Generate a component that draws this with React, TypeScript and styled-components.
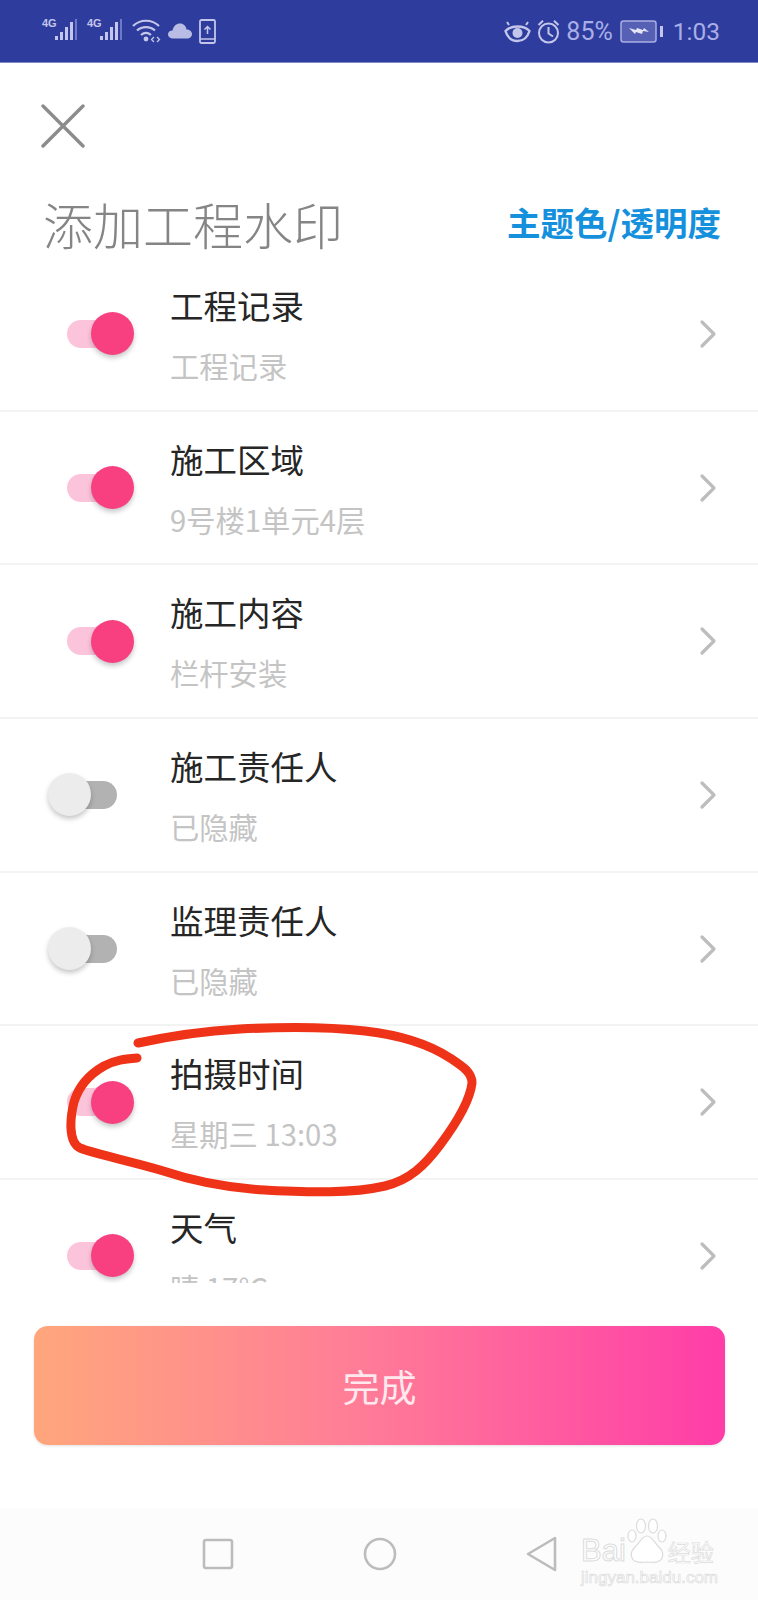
import React from "react";
import styled, { createGlobalStyle } from "styled-components";

const CJK = `"Noto Sans CJK SC", "Noto Sans", sans-serif`;

const GlobalStyle = createGlobalStyle`
    html, body {
        margin: 0;
        padding: 0;
        background: #fff;
    }
    body {
        font-family: ${CJK};
    }
`;

const items = [
    { title: "工程记录", sub: "工程记录", on: true },
    { title: "施工区域", sub: "9号楼1单元4层", on: true },
    { title: "施工内容", sub: "栏杆安装", on: true },
    { title: "施工责任人", sub: "已隐藏", on: false },
    { title: "监理责任人", sub: "已隐藏", on: false },
    { title: "拍摄时间", sub: "星期三 13:03", on: true },
    { title: "天气", sub: "晴 17°C", on: true },
];

const Signal = () => (
    <SignalWrap>
        <SignalLabel>4G</SignalLabel>
        <svg width="25" height="24" viewBox="0 0 25 24">
            <rect x="0" y="17" width="3" height="4" fill="#c3c6ea" />
            <rect x="5" y="13" width="3" height="8" fill="#c3c6ea" />
            <rect x="10" y="8" width="3" height="13" fill="#c3c6ea" />
            <rect x="15" y="3" width="3" height="18" fill="#c3c6ea" />
            <rect x="20" y="0" width="2" height="21" fill="#6f78c2" />
        </svg>
    </SignalWrap>
);

const Wifi = () => (
    <svg width="29" height="25" viewBox="0 0 29 25" fill="none" stroke="#c3c6ea" strokeWidth="2.2">
        <path d="M1 7C8 0 20 0 27 7" />
        <path d="M5 11.500C10 7 18 7 23 11.500" />
        <path d="M9 16C12 13.500 16 13.500 19 16" />
        <circle cx="14" cy="20" r="2.400" fill="#c3c6ea" stroke="none" />
        <path d="M22 18l-2.500 2.500 2.500 2.500M25 18l2.500 2.500-2.500 2.500" strokeWidth="1.300" />
    </svg>
);

const Cloud = () => (
    <svg width="24" height="16" viewBox="0 0 24 16">
        <path
            d="M5 15.500C2 15.500 0 13.500 0 11.500 0 9 2 7.500 4.500 7.500 5.500 3 8.500 .5 12 .5c3.500 0 6 2.500 6.500 6 3 0 5.500 2 5.500 4.500 0 2.500-2 4.500-5 4.500z"
            fill="#b9bde6"
        />
    </svg>
);

const PhoneUp = () => (
    <svg width="17" height="25" viewBox="0 0 17 25" fill="none" stroke="#c3c6ea">
        <rect x="1" y="1" width="15" height="23" rx="1.500" strokeWidth="1.800" />
        <path d="M1 20h15" strokeWidth="1.500" />
        <path d="M8.500 15V8M5.500 10.500l3-3 3 3" strokeWidth="1.500" />
    </svg>
);

const Eye = () => (
    <svg width="27" height="24" viewBox="0 0 27 24" fill="none" stroke="#c3c6ea" strokeWidth="2.400">
        <path d="M1.500 12C7 6 20 6 25.500 12 23 20 18 22 13.500 22 9 22 4 20 1.500 12z" />
        <circle cx="13.500" cy="14" r="5" fill="#c3c6ea" stroke="none" />
        <path d="M5 6 3 3M22 6l2-3" strokeWidth="2" />
    </svg>
);

const Alarm = () => (
    <svg width="23" height="25" viewBox="0 0 23 25" fill="none" stroke="#c3c6ea" strokeWidth="2">
        <circle cx="11.500" cy="14" r="9.500" />
        <path d="M11.500 8v6.500l4.500 3" />
        <path d="M1.500 6 6 1.800M21.500 6 17 1.800" />
    </svg>
);

const Battery = () => (
    <svg width="43" height="23" viewBox="0 0 43 23">
        <rect x="1" y="1" width="35" height="21" rx="2.500" fill="#5660b4" stroke="#a9aee2" strokeWidth="1.500" />
        <rect x="40" y="6" width="3" height="11" fill="#c3c6ea" />
        <path d="M9 8l7 2 1-2 6 2 1-2 5 4-6-1-1 3-6-2-1 2z" fill="#e4e6f8" />
    </svg>
);

const Chevron = () => (
    <svg width="18" height="30" viewBox="0 0 18 30" fill="none" stroke="#bdbdbd" strokeWidth="3.200" strokeLinecap="round" strokeLinejoin="round">
        <path d="M3 3l12 12L3 27" />
    </svg>
);

const App = () => {
    return (
        <Screen>
            <GlobalStyle />
            <StatusBar>
                <StatusGroup>
                    <Signal />
                    <Signal />
                    <Wifi />
                    <Cloud />
                    <PhoneUp />
                </StatusGroup>
                <StatusGroup>
                    <Eye />
                    <AlarmSlot>
                        <Alarm />
                    </AlarmSlot>
                    <StatusText>85%</StatusText>
                    <Battery />
                    <StatusTime>1:03</StatusTime>
                </StatusGroup>
            </StatusBar>
            <CloseRow>
                <svg width="44" height="44" viewBox="0 0 44 44" fill="none" stroke="#8c8c8c" strokeWidth="3.400" strokeLinecap="round">
                    <path d="M2 2l40 40M42 2L2 42" />
                </svg>
            </CloseRow>
            <Header>
                <Title>添加工程水印</Title>
                <ThemeLink>主题色/透明度</ThemeLink>
            </Header>
            <List>
                {items.map(item => (
                    <Row key={item.title}>
                        <Toggle $on={item.on}>
                            <Knob $on={item.on} />
                        </Toggle>
                        <RowText>
                            <RowTitle>{item.title}</RowTitle>
                            <RowSub>{item.sub}</RowSub>
                        </RowText>
                        <Chevron />
                    </Row>
                ))}
            </List>
            <Footer>
                <DoneButton>完成</DoneButton>
            </Footer>
            <NavBar>
                <svg width="32" height="32" viewBox="0 0 32 32" fill="none" stroke="#bcbcbc" strokeWidth="2.600">
                    <rect x="2" y="2" width="28" height="28" rx="2" />
                </svg>
                <svg width="34" height="34" viewBox="0 0 34 34" fill="none" stroke="#bcbcbc" strokeWidth="2.600">
                    <circle cx="17" cy="17" r="15" />
                </svg>
                <svg width="32" height="36" viewBox="0 0 32 36" fill="none" stroke="#bcbcbc" strokeWidth="2.600" strokeLinejoin="round">
                    <path d="M30 2v32L3 18z" />
                </svg>
            </NavBar>
            <Scribble width="758" height="1600" viewBox="0 0 758 1600" fill="none" stroke="#ee3318" strokeWidth="9" strokeLinecap="round" strokeLinejoin="round">
                <path d="M138 1043C170 1036 205 1031 240 1029C280 1027 330 1027 365 1031C400 1035 430 1045 450 1058C462 1066 472 1072 472 1083C470 1100 455 1125 440 1145C425 1165 410 1180 385 1186C350 1194 310 1192 265 1190C225 1188 190 1180 160 1170C130 1161 95 1154 80 1148C68 1142 70 1118 74 1102C79 1085 90 1074 104 1066C115 1060 125 1059 137 1058" />
            </Scribble>
            <Watermark>
                <WatermarkTop>
                    <WatermarkWord>Bai</WatermarkWord>
                    <svg width="42" height="50" viewBox="0 0 42 50" fill="#fff" stroke="#dcdcdc" strokeWidth="1.200">
                        <ellipse cx="6" cy="18" rx="4" ry="6" />
                        <ellipse cx="15" cy="8" rx="4.500" ry="7" />
                        <ellipse cx="27" cy="8" rx="4.500" ry="7" />
                        <ellipse cx="36" cy="18" rx="4" ry="6" />
                        <path d="M21 18c-5 0-7 6-11 10-4 4-6 7-4 12 2 5 8 5 15 4 7 1 13 1 15-4 2-5 0-8-4-12-4-4-6-10-11-10z" />
                    </svg>
                    <WatermarkCn>经验</WatermarkCn>
                </WatermarkTop>
                <WatermarkUrl>jingyan.baidu.com</WatermarkUrl>
            </Watermark>
        </Screen>
    );
};

const Screen = styled.div`
    position: relative;
    width: 758px;
    height: 1600px;
    overflow: hidden;
    display: flex;
    flex-direction: column;
    background: #fff;
`;

const StatusBar = styled.div`
    height: 63px;
    flex: none;
    box-sizing: border-box;
    padding: 0 38px 0 42px;
    display: flex;
    align-items: center;
    justify-content: space-between;
    background: #2e3d9d;
    border-bottom: 1px solid #7f89c8;
`;

const StatusGroup = styled.div`
    display: flex;
    align-items: center;
    gap: 7px;
`;

const AlarmSlot = styled.div`
    display: flex;
    margin: 0 -1px 0 -1px;
`;

const StatusText = styled.span`
    font-family: "Roboto", sans-serif;
    font-size: 25px;
    color: #a9aee6;
`;

const StatusTime = styled(StatusText)`
    margin-left: 3px;
    font-size: 24.5px;
`;

const SignalWrap = styled.div`
    position: relative;
    width: 38px;
    height: 24px;
    display: flex;
    justify-content: flex-end;
`;

const SignalLabel = styled.span`
    position: absolute;
    left: 0;
    top: -2px;
    font-family: "Liberation Sans", sans-serif;
    font-size: 11px;
    font-weight: 700;
    color: #c3c6ea;
`;

const CloseRow = styled.div`
    height: 42px;
    flex: none;
    padding: 41px 0 0 41px;
`;

const Header = styled.div`
    height: 112px;
    flex: none;
    box-sizing: border-box;
    padding: 42px 37px 0 43px;
    display: flex;
    align-items: flex-start;
    justify-content: space-between;
`;

const Title = styled.div`
    font-size: 50px;
    line-height: 70px;
    font-weight: 300;
    color: #858585;
`;

const ThemeLink = styled.div`
    font-size: 33.5px;
    line-height: 52px;
    font-weight: 700;
    color: #1590dc;
    margin-top: 8px;
`;

const List = styled.div`
    height: 1025px;
    flex: none;
    overflow: hidden;
`;

const Row = styled.div`
    height: 153.7px;
    box-sizing: border-box;
    padding: 0 41px 0 67px;
    display: flex;
    align-items: center;
    border-bottom: 2px solid #f3f3f3;
`;

const Toggle = styled.div<{ $on: boolean }>`
    position: relative;
    width: 50px;
    height: 28px;
    flex: none;
    border-radius: 14px;
    background: ${p => (p.$on ? "#fcc4da" : "#b2b2b2")};
`;

const Knob = styled.div<{ $on: boolean }>`
    position: absolute;
    top: -7.5px;
    left: ${p => (p.$on ? "24px" : "-19px")};
    width: 43px;
    height: 43px;
    border-radius: 50%;
    background: ${p => (p.$on ? "#f83f80" : "#ececec")};
    box-shadow: 0 3px 5px rgba(0, 0, 0, 0.22);
`;

const RowText = styled.div`
    flex: 1;
    margin-left: 53px;
    padding-top: 2px;
    display: flex;
    flex-direction: column;
    gap: 14px;
`;

const RowTitle = styled.div`
    font-size: 33.5px;
    line-height: 46px;
    color: #262626;
`;

const RowSub = styled.div`
    font-size: 29.3px;
    line-height: 46px;
    color: #c4c4c4;
`;

const Footer = styled.div`
    flex: none;
    padding: 43px 33px 0 34px;
`;

const DoneButton = styled.div`
    height: 119px;
    border-radius: 14px;
    display: flex;
    align-items: center;
    justify-content: center;
    font-size: 37px;
    color: #ffe9ee;
    background: linear-gradient(90deg, #ffa67c 0%, #ff7f96 45%, #ff3da8 100%);
    box-shadow: 0 1px 3px rgba(0, 0, 0, 0.12);
`;

const NavBar = styled.div`
    flex: 1;
    margin-top: 63px;
    padding: 0 201px 0 202px;
    display: flex;
    align-items: center;
    justify-content: space-between;
    background: #fcfcfc;
`;

const Scribble = styled.svg`
    position: absolute;
    top: 0;
    left: 0;
    pointer-events: none;
`;

const Watermark = styled.div`
    position: absolute;
    left: 581px;
    top: 1518px;
    width: 140px;
`;

const WatermarkTop = styled.div`
    display: flex;
    align-items: flex-end;
    height: 50px;
    white-space: nowrap;
`;

const WatermarkWord = styled.span`
    font-family: "Liberation Sans", sans-serif;
    font-size: 31px;
    line-height: 34px;
    color: #fff;
    -webkit-text-stroke: 1px #dcdcdc;
`;

const WatermarkCn = styled.span`
    font-size: 23px;
    line-height: 34px;
    color: #fff;
    -webkit-text-stroke: 0.7px #dcdcdc;
`;

const WatermarkUrl = styled.div`
    margin-top: 1px;
    font-family: "Liberation Sans", sans-serif;
    font-size: 17px;
    line-height: 18px;
    white-space: nowrap;
    color: #fff;
    -webkit-text-stroke: 0.7px #dcdcdc;
`;

export default App;
